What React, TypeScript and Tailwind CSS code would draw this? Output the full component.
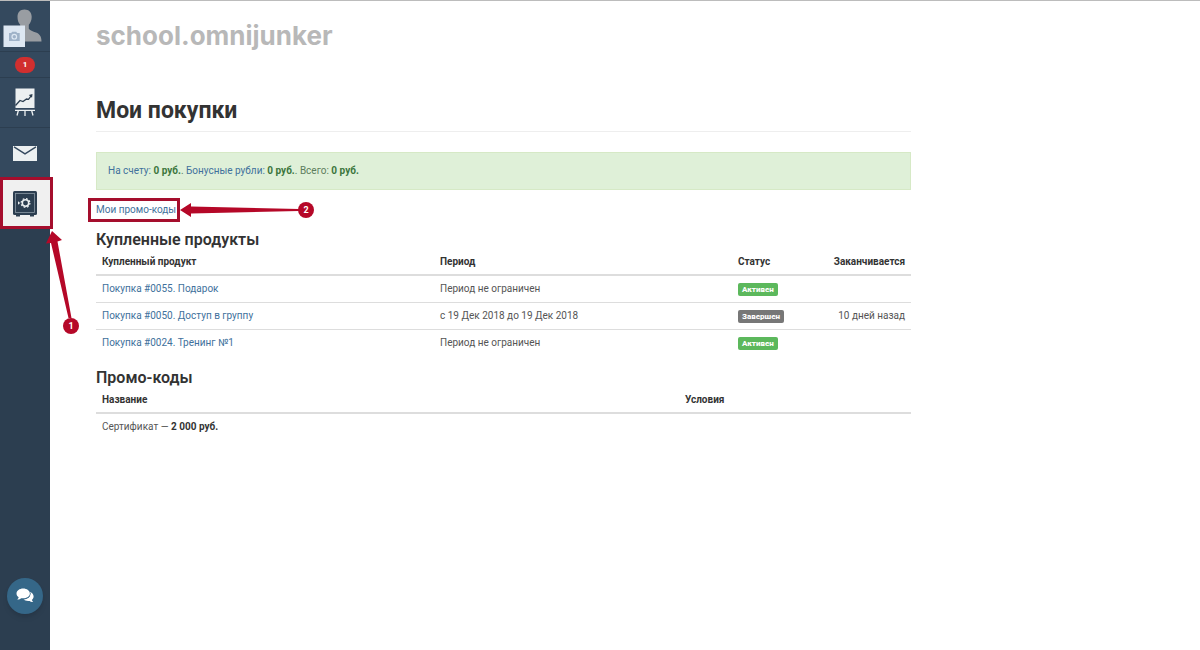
import React from 'react';
import { clsx } from 'clsx';

interface Purchase {
  id: string;
  title: string;
  period: string;
  active: boolean;
  ends?: string;
}

const purchases: Purchase[] = [
  { id: '0055', title: 'Подарок', period: 'Период не ограничен', active: true },
  {
    id: '0050',
    title: 'Доступ в группу',
    period: 'с 19 Дек 2018 до 19 Дек 2018',
    active: false,
    ends: '10 дней назад',
  },
  { id: '0024', title: 'Тренинг №1', period: 'Период не ограничен', active: true },
];

function AvatarIcon() {
  return (
    <svg width="50" height="50" viewBox="0 0 50 50" aria-hidden="true">
      <path
        d="M24.500 8.500c-4.300 0-7 2.800-7 7.200 0 3.400 1 6.300 2.700 8.100v4.200L10 33v7.500h31.500c0-5-1.800-7.500-5.500-9-3-1.200-6.500-2.300-7.200-3.800v-4c1.700-1.800 2.900-4.700 2.900-8 0-4.400-2.900-7.200-7.200-7.200z"
        fill="#999da2"
      />
      <rect x="3.500" y="24.500" width="21.500" height="21.500" fill="#dde7f2" />
      <path d="M9 32h2.200l1-1.300h4l1 1.300h2.500v8H9z" fill="#9fb2c8" />
      <circle cx="14.300" cy="35.700" r="2.300" fill="none" stroke="#dde7f2" strokeWidth="1.200" />
    </svg>
  );
}

function ChartIcon() {
  return (
    <svg width="50" height="49" viewBox="0 0 50 49" aria-hidden="true">
      <rect x="15.500" y="10.500" width="19" height="19.500" fill="#ecf0f1" />
      <path
        d="M15.500 27.500l4.500-5 3 1 3.500-2.500 2 .3 3-4"
        fill="none"
        stroke="#2c3e50"
        strokeWidth="1.300"
      />
      <path d="M28.800 17l3.700-1-.5 3.700z" fill="#2c3e50" />
      <path
        d="M15 32.400h20M18.500 32l-1.500 5.500M25 32v6M31.500 32l1.500 5.500"
        fill="none"
        stroke="#ecf0f1"
        strokeWidth="1.300"
      />
    </svg>
  );
}

function MailIcon() {
  return (
    <svg width="24" height="15" viewBox="0 0 24 15" aria-hidden="true">
      <rect width="24" height="15" fill="#ecf0f1" />
      <path d="M1 .8l11 7 11-7" fill="none" stroke="#34495e" strokeWidth="1.400" />
    </svg>
  );
}

function SafeIcon() {
  return (
    <svg className="overflow-visible" width="24" height="24" viewBox="0 0 24 24" aria-hidden="true">
      <rect width="24" height="24" rx="1.500" fill="#2c3e50" />
      <path d="M3 24h4v1.500H3zM17 24h4v1.500h-4z" fill="#2c3e50" />
      <rect x="2.500" y="2.500" width="19" height="19" fill="none" stroke="#8b98a5" strokeWidth=".8" />
      <circle cx="12.500" cy="12" r="3.200" fill="none" stroke="#ecf0f1" strokeWidth="1.500" />
      <circle
        cx="12.500"
        cy="12"
        r="4.400"
        fill="none"
        stroke="#ecf0f1"
        strokeWidth="1.200"
        strokeDasharray="1.700 1.756"
      />
      <path d="M5 10.200l2.200 1.800L5 13.800z" fill="#ecf0f1" />
    </svg>
  );
}

function ChatIcon() {
  return (
    <svg width="18" height="16" viewBox="0 0 18 16" aria-hidden="true">
      <path
        d="M12 3.500c3.400.3 5.600 2.500 5.600 4.900 0 1.400-.7 2.500-1.700 3.300.1 1 .6 1.700 1.300 2.300-1.500.1-2.700-.4-3.500-1.100-2.700.4-5-.3-6.200-1.600 4 0 6.700-2.500 6.700-5.300 0-1-.2-1.700-2.200-2.500z"
        fill="#fff"
      />
      <ellipse cx="7.200" cy="5.600" rx="7.400" ry="5.900" fill="#356788" />
      <path
        d="M7.200.5C3.500.5.500 2.700.5 5.500c0 1.600.9 2.900 2.200 3.800-.2 1-.8 1.700-1.500 2.200 1.600.1 3-.4 4-1.300 4.800.7 8.700-1.600 8.700-4.700 0-2.800-3-5-6.700-5z"
        fill="#fff"
      />
    </svg>
  );
}

function StatusLabel({ active }: { active: boolean }) {
  return (
    <span
      className={clsx(
        'inline-block rounded-xs px-1 text-[8px] leading-[13px] font-extrabold text-white',
        active ? 'bg-[#5cb85c]' : 'bg-[#777777]'
      )}
    >
      {active ? 'Активен' : 'Завершен'}
    </span>
  );
}

function Sidebar() {
  return (
    <aside className="flex w-[50px] shrink-0 flex-col items-center bg-[#2c3e50]">
      <nav className="w-full bg-[#34495e]">
        <a href="#profile" aria-label="Профиль" className="block border-b border-[#2c3e50]">
          <AvatarIcon />
        </a>
        <a href="#notifications" className="flex h-[26px] items-center justify-center border-b border-[#2c3e50]">
          <span className="rounded-full bg-[#d12f2f] px-2 text-[8px] leading-4 font-bold text-white">1</span>
        </a>
        <a href="#stats" aria-label="Статистика" className="block border-b border-[#2c3e50]">
          <ChartIcon />
        </a>
        <a href="#mail" aria-label="Сообщения" className="flex h-[49px] items-center justify-center pt-0.5">
          <MailIcon />
        </a>
        <a
          href="#purchases"
          aria-label="Мои покупки"
          className="relative flex h-[52px] items-center justify-center bg-[#f0f0f0]"
        >
          <SafeIcon />
          <span className="absolute -right-[3px] inset-y-0 left-0 border-3 border-[#a50e2d]" />
          <svg className="absolute top-[54px] left-[44px]" width="38" height="104" viewBox="0 0 38 104" aria-hidden="true">
            <path d="M8 0L18 9l-4.500 1.500L27.500 87h-3L7 12l-5 .5z" fill="#b50828" />
          </svg>
          <span className="absolute top-[141px] left-[63px] size-4 rounded-full bg-[#b50828] text-center text-[9px] leading-4 font-bold text-white">
            1
          </span>
        </a>
      </nav>
      <button
        type="button"
        aria-label="Чат"
        className="mt-auto mb-9 flex size-9 items-center justify-center rounded-full bg-[#356788] shadow-md"
      >
        <ChatIcon />
      </button>
    </aside>
  );
}

function PurchasesTable() {
  return (
    <table className="w-full table-fixed text-left">
      <thead>
        <tr className="border-b-2 border-[#dddddd] text-[#333333]">
          <th className="w-[338px] px-1.5 py-1">Купленный продукт</th>
          <th className="w-[298px] px-1.5 py-1">Период</th>
          <th className="w-[84px] px-1.5 py-1">Статус</th>
          <th className="px-1.5 py-1 text-right">Заканчивается</th>
        </tr>
      </thead>
      <tbody>
        {purchases.map((p) => (
          <tr key={p.id} className="h-[27px] border-b border-[#dddddd] last:border-b-0">
            <td className="px-1.5">
              <a href={`#purchase-${p.id}`} className="text-[#41719c]">
                Покупка #{p.id}. {p.title}
              </a>
            </td>
            <td className="px-1.5">{p.period}</td>
            <td className="px-1.5">
              <StatusLabel active={p.active} />
            </td>
            <td className="px-1.5 text-right">{p.ends}</td>
          </tr>
        ))}
      </tbody>
    </table>
  );
}

function PromoTable() {
  return (
    <table className="w-full table-fixed text-left">
      <thead>
        <tr className="border-b-2 border-[#dddddd] text-[#333333]">
          <th className="w-[583px] px-1.5 py-1">Название</th>
          <th className="px-1.5 py-1">Условия</th>
        </tr>
      </thead>
      <tbody>
        <tr className="h-[27px]">
          <td className="px-1.5">
            Сертификат — <b className="text-[#333333]">2 000 руб.</b>
          </td>
          <td />
        </tr>
      </tbody>
    </table>
  );
}

export default function App() {
  return (
    <div className="flex min-h-screen border-t border-[#bcbcbc] bg-white font-['Roboto','Liberation_Sans',sans-serif] text-[10px] leading-4 text-[#555555]">
      <Sidebar />
      <main className="min-w-0 flex-1 pl-[46px]">
        <div className="max-w-[815px]">
          <div className="pt-4 font-['Inter','Liberation_Sans',sans-serif] text-[26px] leading-[38px] font-bold text-[#b8b8b8]">
            school.omnijunker
          </div>
          <h1 className="mt-[42px] border-b border-[#eeeeee] pb-1.5 text-[23px] leading-7 font-bold text-[#333333]">
            Мои покупки
          </h1>

          <div className="mt-5 border border-[#d6e9c6] bg-[#dff0d8] px-[11px] py-2.5 text-[#5c7d5c]">
            <a href="#account" className="text-[#41719c]">
              На счету: <b className="text-[#3c763d]">0 руб.</b>
            </a>
            .{' '}
            <a href="#bonus" className="text-[#41719c]">
              Бонусные рубли: <b className="text-[#3c763d]">0 руб.</b>
            </a>
            . Всего: <b className="text-[#3c763d]">0 руб.</b>
          </div>

          <div className="mt-3">
            <a href="#promo" className="relative inline-block text-[#41719c]">
              Мои промо-коды
              <span className="absolute -inset-y-1 -left-2 w-[92px] border-3 border-[#a50e2d]" />
              <svg className="absolute top-0 left-[83px]" width="128" height="16" viewBox="0 0 128 16" aria-hidden="true">
                <path d="M1 8L12 1v3.500L120 7v2L12 11.500V15z" fill="#b50828" />
              </svg>
              <span className="absolute top-0 left-[202px] size-4 rounded-full bg-[#b50828] text-center text-[9px] leading-4 font-bold text-white">
                2
              </span>
            </a>
          </div>

          <h2 className="mt-3 text-[16px] leading-5 font-semibold text-[#333333]">Купленные продукты</h2>
          <PurchasesTable />

          <h2 className="mt-3 text-[16px] leading-5 font-semibold text-[#333333]">Промо-коды</h2>
          <PromoTable />
        </div>
      </main>
    </div>
  );
}
